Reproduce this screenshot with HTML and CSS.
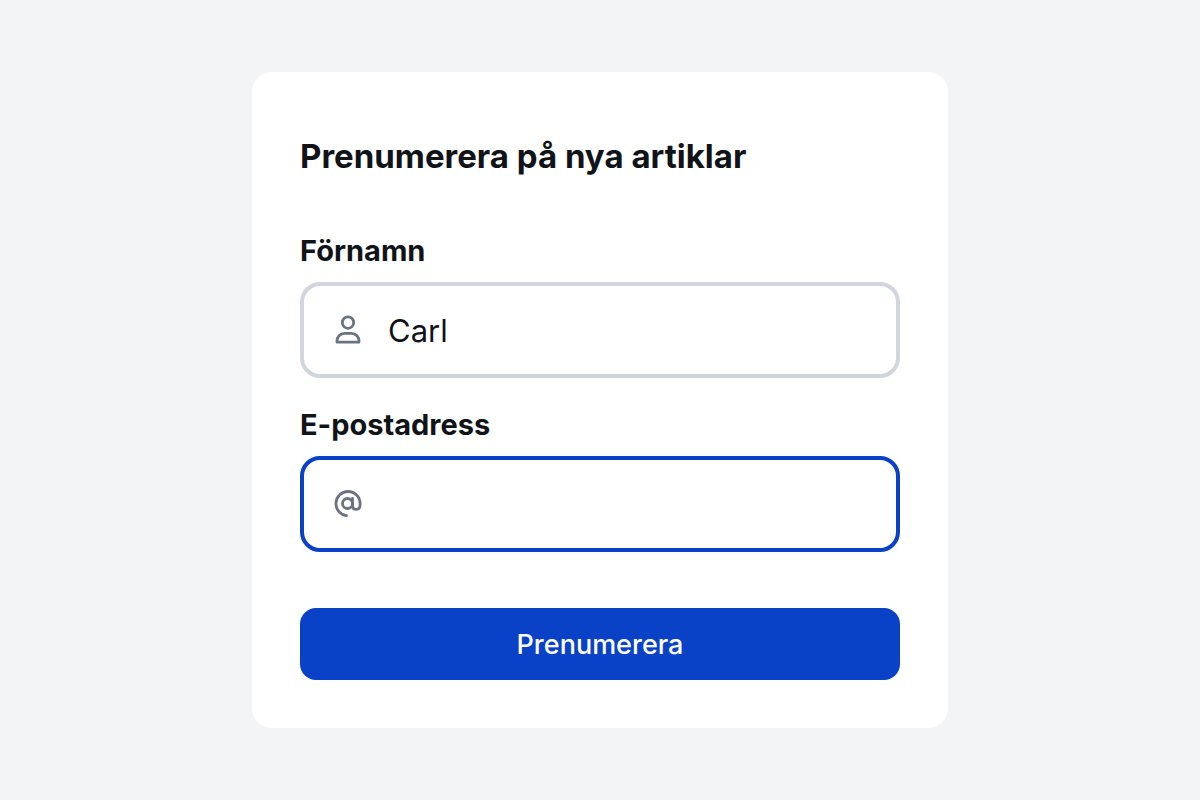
FILE: index.html
```html
<!DOCTYPE html>
<html lang="sv">
<head>
<meta charset="utf-8">
<meta name="viewport" content="width=device-width, initial-scale=1">
<title>Prenumerera på nya artiklar</title>
<link rel="stylesheet" href="styles.css">
</head>
<body>
<form class="card">
  <h1 class="title">Prenumerera på nya artiklar</h1>
  <div class="group">
    <label class="label" for="name">Förnamn</label>
    <div class="field">
      <svg class="icon" viewBox="0 0 32 32" aria-hidden="true"><circle cx="16" cy="8.600" r="5.700"/><path d="M5 28.200v-.9c0-4.600 3.400-8 7.800-8h6.400c4.400 0 7.800 3.400 7.800 8v.9z"/></svg>
      <input class="input" id="name" type="text" value="Carl">
    </div>
  </div>
  <div class="group">
    <label class="label" for="email">E-postadress</label>
    <div class="field field-active">
      <svg class="icon" viewBox="0 0 32 32" aria-hidden="true"><circle cx="15.500" cy="15.500" r="5"/><path d="M20.500 10.500v7.500c0 2 1.500 3.300 3.600 3.300 2.300 0 4-1.600 4-4.300v-1.500c0-6.800-5.300-12-12.100-12a12.100 12.100 0 0 0-1.500 24.100"/></svg>
      <input class="input" id="email" type="email">
    </div>
  </div>
  <button class="button" type="submit">Prenumerera</button>
</form>
</body>
</html>
```
FILE: styles.css
```css
* { box-sizing: border-box; }
body {
  margin: 0;
  min-height: 100vh;
  display: flex;
  align-items: center;
  justify-content: center;
  background: #f2f4f6;
  color: #101418;
  font-family: Inter, "Noto Sans", sans-serif;
}
.card {
  width: 58%;
  padding: 60px 48px 48px;
  border-radius: 20px;
  background: #fff;
}
.title { margin: 0 0 52px; font-size: 33px; line-height: 48px; font-weight: 700; }
.group { display: flex; flex-direction: column; gap: 12px; margin-bottom: 28px; }
.label { font-size: 29px; line-height: 38px; font-weight: 700; }
.field {
  display: flex;
  align-items: center;
  gap: 24px;
  height: 96px;
  padding: 0 28px;
  border: 4px solid #d1d5dc;
  border-radius: 20px;
}
.field-active { border-color: #0a42c7; }
.icon {
  flex: none;
  width: 32px;
  height: 32px;
  fill: none;
  stroke: #6b7280;
  stroke-width: 2.8;
  stroke-linecap: round;
  stroke-linejoin: round;
}
.input {
  flex: 1;
  min-width: 0;
  padding: 2px 0 0;
  border: 0;
  outline: 0;
  background: transparent;
  color: inherit;
  font: inherit;
  font-size: 31px;
  line-height: 40px;
}
.button {
  width: 100%;
  height: 72px;
  margin-top: 28px;
  border: 0;
  border-radius: 16px;
  background: #0a42c7;
  color: #fff;
  font: inherit;
  font-size: 27px;
  font-weight: 500;
}
```
